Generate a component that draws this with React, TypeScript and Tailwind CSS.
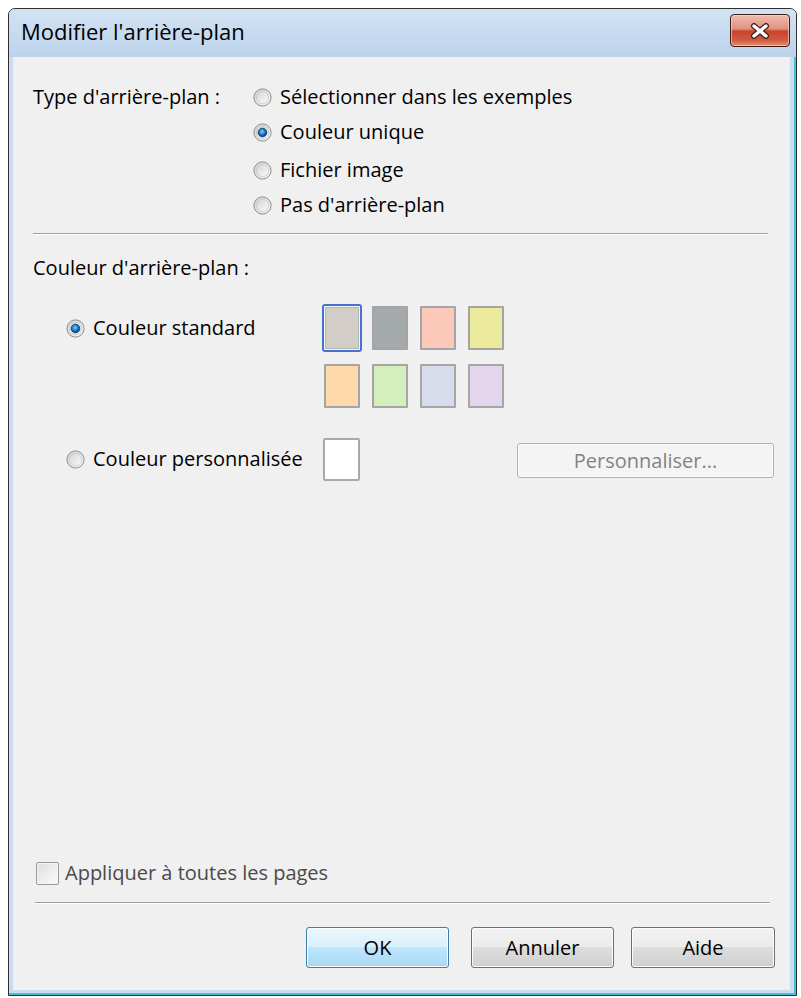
import React from "react";

const FONT = "font-['Open_Sans','Noto_Sans',sans-serif]";

const SWATCHES = [
  ["#d3cdc7", "#a4a9ab", "#fcc8ba", "#eceb9c"],
  ["#fed9a9", "#d5efbc", "#d6dcea", "#e4d4ed"],
];

function Radio({ checked = false }: { checked?: boolean }) {
  return (
    <svg width="19" height="19" viewBox="0 0 19 19" className="shrink-0">
      <defs>
        <linearGradient id="radioOuter" x1="0" y1="0" x2="1" y2="1">
          <stop offset="0" stopColor="#cfd0d1" />
          <stop offset="1" stopColor="#f7f7f7" />
        </linearGradient>
        <linearGradient id="radioInner" x1="0" y1="0" x2="1" y2="1">
          <stop offset="0" stopColor="#d4d4d4" />
          <stop offset="1" stopColor="#fbfbfb" />
        </linearGradient>
        <radialGradient id="radioDot" cx="0.45" cy="0.4" r="0.6">
          <stop offset="0" stopColor="#7fd0ff" />
          <stop offset="0.55" stopColor="#1a7fd0" />
          <stop offset="1" stopColor="#0a3a72" />
        </radialGradient>
      </defs>
      <circle cx="9.5" cy="9.5" r="8.6" fill="url(#radioOuter)" stroke="#8b8d8f" strokeWidth="1" />
      <circle cx="9.5" cy="9.5" r="6.2" fill="url(#radioInner)" stroke="#bdbdbd" strokeWidth="0.6" />
      {checked && <circle cx="9.5" cy="9.5" r="4.3" fill="url(#radioDot)" stroke="#0c2f5c" strokeWidth="0.8" />}
    </svg>
  );
}

function RadioRow({ label, checked, className = "" }: { label: string; checked?: boolean; className?: string }) {
  return (
    <div className={`flex h-[34px] items-center gap-[8px] ${className}`}>
      <Radio checked={checked} />
      <span className="whitespace-nowrap">{label}</span>
    </div>
  );
}

function Separator({ className = "" }: { className?: string }) {
  return <div className={`h-[2px] border-t border-b border-t-[#a0a0a0] border-b-white ${className}`} />;
}

function Swatch({ color, selected }: { color: string; selected?: boolean }) {
  if (selected) {
    return (
      <div className="h-[48px] w-[40px] rounded-[3px] border-2 border-[#4672cf] bg-[#f6f6f6] p-[1px]">
        <div className="h-full w-full border border-[#b5b5b5]" style={{ backgroundColor: color }} />
      </div>
    );
  }
  return (
    <div className="flex h-[48px] w-[40px] items-center justify-center">
      <div className="h-[44px] w-[36px] rounded-[1px] border-2 border-[#a5a5a5]" style={{ backgroundColor: color }} />
    </div>
  );
}

function WinButton({ label, primary, className = "" }: { label: string; primary?: boolean; className?: string }) {
  const skin = primary
    ? "border-[#3c7fb1] bg-[linear-gradient(to_bottom,#eaf6fd_0%,#d9f0fc_50%,#bee6fd_50%,#a7d9f5_100%)]"
    : "border-[#707070] bg-[linear-gradient(to_bottom,#f2f2f2_0%,#ebebeb_50%,#dddddd_50%,#cfcfcf_100%)]";
  return (
    <button
      className={`flex h-[41px] items-center justify-center rounded-[3px] border shadow-[inset_0_0_0_1px_#fcfcfc] text-black ${skin} ${className}`}
    >
      {label}
    </button>
  );
}

export default function App() {
  return (
    <div className={`min-h-screen bg-white pl-[8px] pt-[8px] ${FONT}`}>
      {/* Window */}
      <div className="flex h-[988px] w-[789px] flex-col overflow-hidden rounded-t-[7px] border border-[#2e2e2e] bg-[#c9dcf0]">
        {/* Title bar */}
        <div className="flex h-[48px] shrink-0 items-start justify-between bg-[linear-gradient(to_bottom,#d3e3f4,#bcd3eb)] pl-[12px] pr-[6px]">
          <span className="mt-[6px] text-[22px] leading-[32px] text-black">Modifier l'arrière-plan</span>
          <div className="mt-[5px] flex h-[33px] w-[60px] items-center justify-center rounded-[4px] border border-[#3f1b16] bg-[linear-gradient(to_bottom,#efbcae_0%,#df927f_45%,#c8432b_52%,#cf5a3f_80%,#e48f70_100%)] shadow-[inset_0_0_0_1px_rgba(255,220,210,0.6)]">
            <svg width="20" height="16" viewBox="0 0 20 16">
              <path d="M4 3 L16 13 M16 3 L4 13" stroke="#4a2018" strokeWidth="6" strokeLinecap="round" />
              <path d="M4 3 L16 13 M16 3 L4 13" stroke="#ffffff" strokeWidth="3.4" strokeLinecap="round" />
            </svg>
          </div>
        </div>

        {/* Frame + client */}
        <div className="flex flex-1 border-r-2 border-b-2 border-[#3ec3d3] pb-[3px] pl-[4px] pr-[4px]">
          <div className="flex h-[933px] w-[777px] flex-col bg-[#f0f0f0] text-[20px] leading-none text-black">
            {/* Background type */}
            <div className="flex pl-[20px] pt-[23px]">
              <div className="flex h-[34px] w-[220px] items-center whitespace-nowrap">Type d'arrière-plan :</div>
              <div className="flex flex-col">
                <RadioRow label="Sélectionner dans les exemples" />
                <RadioRow label="Couleur unique" checked className="mt-[1px]" />
                <RadioRow label="Fichier image" className="mt-[4px]" />
                <RadioRow label="Pas d'arrière-plan" className="mt-[1px]" />
              </div>
            </div>

            <Separator className="ml-[20px] mr-[22px] mt-[11px]" />

            <div className="mt-[16px] flex h-[34px] items-center pl-[20px]">Couleur d'arrière-plan :</div>

            {/* Standard colours */}
            <div className="mt-[19px] flex pl-[53px]">
              <div className="flex h-[48px] w-[256px] items-center">
                <RadioRow label="Couleur standard" checked />
              </div>
              <div className="grid grid-cols-[repeat(4,40px)] gap-x-[8px] gap-y-[10px]">
                {SWATCHES.flat().map((c, i) => (
                  <Swatch key={c} color={c} selected={i === 0} />
                ))}
              </div>
            </div>

            {/* Custom colour */}
            <div className="mt-[27px] flex h-[44px] items-center pl-[53px] pr-[16px]">
              <div className="w-[257px]">
                <RadioRow label="Couleur personnalisée" />
              </div>
              <div className="h-[43px] w-[37px] rounded-[2px] border-2 border-[#a9a9a9] bg-white" />
              <button className="ml-auto mt-[3px] flex h-[35px] w-[257px] items-center justify-center rounded-[3px] border border-[#adb2b5] bg-[#f4f4f4] text-[#838383] shadow-[inset_0_0_0_1px_#fbfbfb]">
                Personnaliser...
              </button>
            </div>

            <div className="flex-1" />

            {/* Apply to all */}
            <div className="ml-[23px] flex h-[24px] items-center gap-[6px]">
              <span className="h-[23px] w-[23px] rounded-[2px] border border-[#9a9a9a] bg-linear-to-br from-[#dedede] to-[#fbfbfb] shadow-[inset_0_0_0_1px_#f4f4f4]" />
              <span className="text-[#4a4a4a]">Appliquer à toutes les pages</span>
            </div>

            <Separator className="ml-[22px] mr-[20px] mt-[17px]" />

            {/* Dialog buttons */}
            <div className="mt-[23px] flex pb-[22px] pl-[293px]">
              <WinButton label="OK" primary className="w-[143px]" />
              <WinButton label="Annuler" className="ml-[22px] w-[143px]" />
              <WinButton label="Aide" className="ml-[17px] w-[144px]" />
            </div>
          </div>
        </div>
      </div>
    </div>
  );
}
